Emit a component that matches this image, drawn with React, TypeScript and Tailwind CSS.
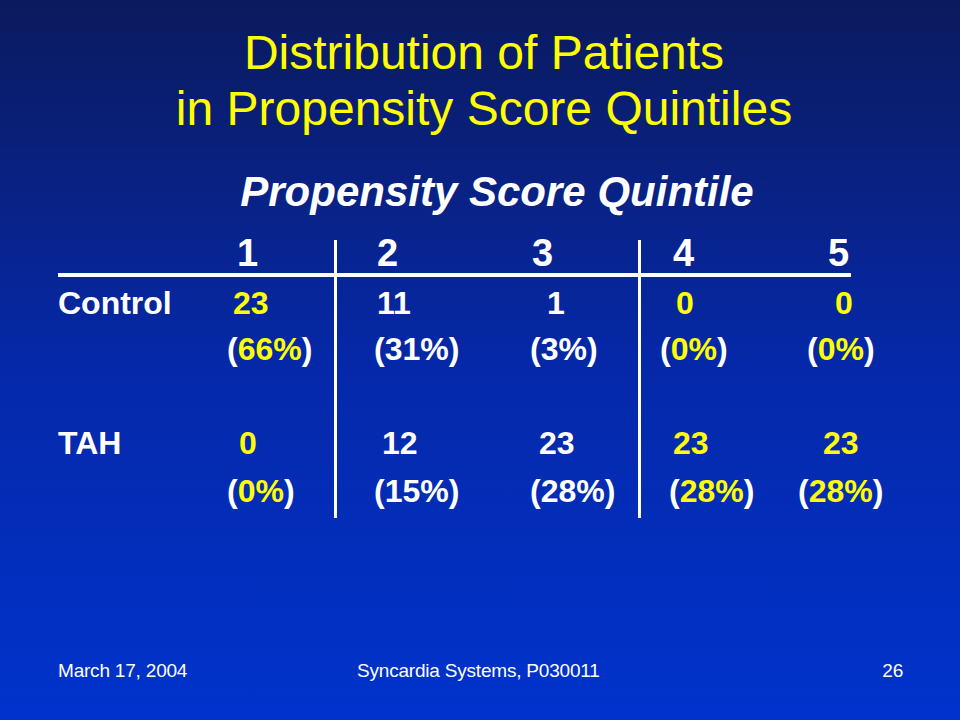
function Pct({ value, hot }: { value: string; hot?: boolean }) {
  return (
    <span>
      (<span className={hot ? 'text-[#ffff00]' : ''}>{value}</span>)
    </span>
  );
}

function App() {
  return (
    <div className="w-[960px] h-[720px] flex flex-col bg-gradient-to-b from-[#0a1a5e] via-[#0528a8] to-[#0033cc] font-['Liberation_Sans',Arial,sans-serif] text-white overflow-hidden">
      <h1 className="pt-[25px] pl-[8px] text-center text-[48px] leading-[56px] text-[#ffff00] font-normal">
        Distribution of Patients
        <br />
        in Propensity Score Quintiles
      </h1>

      <h2 className="mt-[31px] pl-[34px] text-center text-[42px] leading-[48px] font-bold italic">
        Propensity Score Quintile
      </h2>

      <div className="relative mt-[18px] font-bold">
        <div className="absolute left-[334px] top-[6px] w-[3px] h-[278px] bg-white" />
        <div className="absolute left-[638px] top-[6px] w-[3px] h-[278px] bg-white" />

        <div className="ml-[58px] w-[793px] grid grid-cols-[162px_115px_155px_150px_140px_71px] text-[38px] leading-[39px] border-b-4 border-white">
          <span />
          <span className="ml-[17px]">1</span>
          <span className="ml-[42px]">2</span>
          <span className="ml-[42px]">3</span>
          <span className="ml-[33px]">4</span>
          <span className="ml-[48px]">5</span>
        </div>

        <div className="ml-[58px] mt-[8px] grid grid-cols-[162px_115px_155px_150px_140px_120px] text-[32px] leading-[36px]">
          <span>Control</span>
          <span className="ml-[13px] text-[#ffff00]">23</span>
          <span className="ml-[42px]">11</span>
          <span className="ml-[57px]">1</span>
          <span className="ml-[36px] text-[#ffff00]">0</span>
          <span className="ml-[55px] text-[#ffff00]">0</span>
        </div>

        <div className="ml-[58px] mt-[10px] grid grid-cols-[162px_115px_155px_150px_140px_120px] text-[32px] leading-[36px]">
          <span />
          <span className="ml-[7px]"><Pct value="66%" hot /></span>
          <span className="ml-[39px]"><Pct value="31%" /></span>
          <span className="ml-[40px]"><Pct value="3%" /></span>
          <span className="ml-[20px]"><Pct value="0%" hot /></span>
          <span className="ml-[27px]"><Pct value="0%" hot /></span>
        </div>

        <div className="ml-[58px] mt-[58px] grid grid-cols-[162px_115px_155px_150px_140px_120px] text-[32px] leading-[36px]">
          <span>TAH</span>
          <span className="ml-[19px] text-[#ffff00]">0</span>
          <span className="ml-[47px]">12</span>
          <span className="ml-[49px]">23</span>
          <span className="ml-[33px] text-[#ffff00]">23</span>
          <span className="ml-[43px] text-[#ffff00]">23</span>
        </div>

        <div className="ml-[58px] mt-[12px] grid grid-cols-[162px_115px_155px_150px_140px_120px] text-[32px] leading-[36px]">
          <span />
          <span className="ml-[7px]"><Pct value="0%" hot /></span>
          <span className="ml-[39px]"><Pct value="15%" /></span>
          <span className="ml-[40px]"><Pct value="28%" /></span>
          <span className="ml-[29px]"><Pct value="28%" hot /></span>
          <span className="ml-[18px]"><Pct value="28%" hot /></span>
        </div>
      </div>

      <footer className="mt-auto pb-[37px] pl-[58px] pr-[57px] flex text-[19px] leading-[24px] tracking-[-0.2px]">
        <span className="w-[299px]">March 17, 2004</span>
        <span className="flex-1">Syncardia Systems, P030011</span>
        <span>26</span>
      </footer>
    </div>
  );
}

export default App;
